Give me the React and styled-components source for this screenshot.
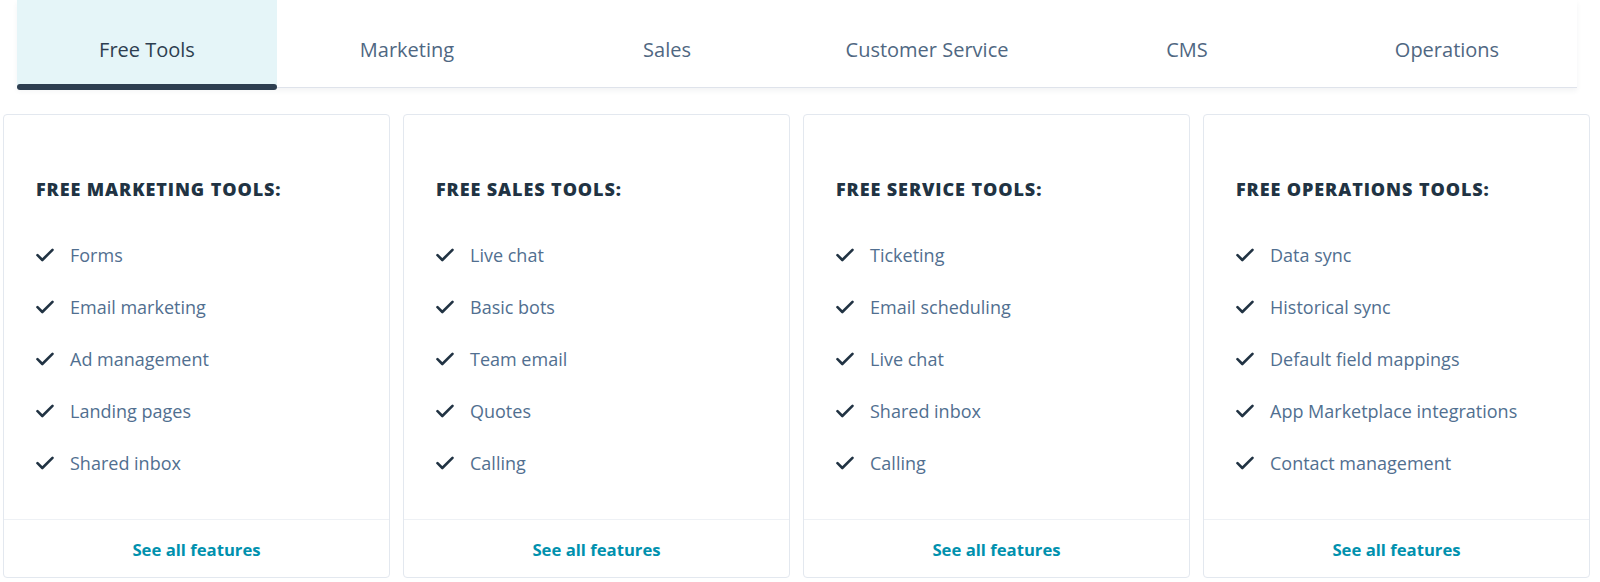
import React from "react";
import styled, { createGlobalStyle } from "styled-components";

const GlobalStyle = createGlobalStyle`
  html, body {
    margin: 0;
    padding: 0;
    background: #ffffff;
  }
  body {
    font-family: "Open Sans", "Noto Sans", sans-serif;
    color: #33475b;
  }
`;

const Page = styled.div`
  width: 1600px;
  height: 582px;
  overflow: hidden;
`;

const TabBar = styled.nav`
  display: flex;
  margin: 0 23px 0 17px;
  height: 87px;
  border-bottom: 1px solid #dfe3eb;
  box-shadow: 0 3px 5px rgba(45, 62, 80, 0.06);
`;

const Tab = styled.button`
  position: relative;
  flex: 0 0 260px;
  border: 0;
  padding: 12px 0 0;
  margin: 0;
  font-family: inherit;
  font-size: 20px;
  font-weight: 400;
  color: ${(p) => (p.$active ? "#2d3e50" : "#4f6782")};
  background: ${(p) => (p.$active ? "#e5f5f8" : "transparent")};
  cursor: pointer;

  &::after {
    content: "";
    display: ${(p) => (p.$active ? "block" : "none")};
    position: absolute;
    left: 0;
    right: 0;
    bottom: -3px;
    height: 6px;
    border-radius: 3px;
    background: #2d3e50;
  }
`;

const Cards = styled.div`
  display: grid;
  grid-template-columns: repeat(4, 387px);
  gap: 13px;
  padding: 26px 0 0 3px;
`;

const Card = styled.section`
  height: 464px;
  box-sizing: border-box;
  border: 1px solid #e3e8ef;
  border-radius: 4px;
  display: flex;
  flex-direction: column;
`;

const Body = styled.div`
  flex: 1;
  padding: 62px 0 0 32px;
`;

const Heading = styled.h3`
  margin: 0 0 42px;
  font-size: 18px;
  font-weight: 800;
  letter-spacing: 0.9px;
  color: #213343;
`;

const List = styled.ul`
  list-style: none;
  margin: 0;
  padding: 0;
  display: flex;
  flex-direction: column;
  gap: 28px;
`;

const Item = styled.li`
  display: flex;
  align-items: center;
  height: 24px;
  font-size: 18px;
  color: #516f90;
`;

const Check = styled.svg`
  width: 18px;
  height: 14px;
  margin-right: 16px;
  flex: none;
`;

const Footer = styled.a`
  display: flex;
  align-items: center;
  justify-content: center;
  height: 58px;
  padding-top: 1px;
  box-sizing: border-box;
  border-top: 1px solid #eef1f5;
  font-size: 16.7px;
  font-weight: 700;
  color: #0091ae;
  text-decoration: none;
`;

const tabs = ["Free Tools", "Marketing", "Sales", "Customer Service", "CMS", "Operations"];

const groups = [
  {
    title: "FREE MARKETING TOOLS:",
    items: ["Forms", "Email marketing", "Ad management", "Landing pages", "Shared inbox"],
  },
  {
    title: "FREE SALES TOOLS:",
    items: ["Live chat", "Basic bots", "Team email", "Quotes", "Calling"],
  },
  {
    title: "FREE SERVICE TOOLS:",
    items: ["Ticketing", "Email scheduling", "Live chat", "Shared inbox", "Calling"],
  },
  {
    title: "FREE OPERATIONS TOOLS:",
    items: [
      "Data sync",
      "Historical sync",
      "Default field mappings",
      "App Marketplace integrations",
      "Contact management",
    ],
  },
];

function CheckIcon() {
  return (
    <Check viewBox="0 0 18 14">
      <path
        d="M1.5 7.2 L6.3 12 L16.5 1.8"
        fill="none"
        stroke="#213343"
        strokeWidth="2.6"
        strokeLinecap="round"
        strokeLinejoin="round"
      />
    </Check>
  );
}

export default function App() {
  return (
    <Page>
      <GlobalStyle />
      <TabBar>
        {tabs.map((t, i) => (
          <Tab key={t} $active={i === 0}>
            {t}
          </Tab>
        ))}
      </TabBar>
      <Cards>
        {groups.map((g) => (
          <Card key={g.title}>
            <Body>
              <Heading>{g.title}</Heading>
              <List>
                {g.items.map((item) => (
                  <Item key={item}>
                    <CheckIcon />
                    {item}
                  </Item>
                ))}
              </List>
            </Body>
            <Footer href="#">See all features</Footer>
          </Card>
        ))}
      </Cards>
    </Page>
  );
}
